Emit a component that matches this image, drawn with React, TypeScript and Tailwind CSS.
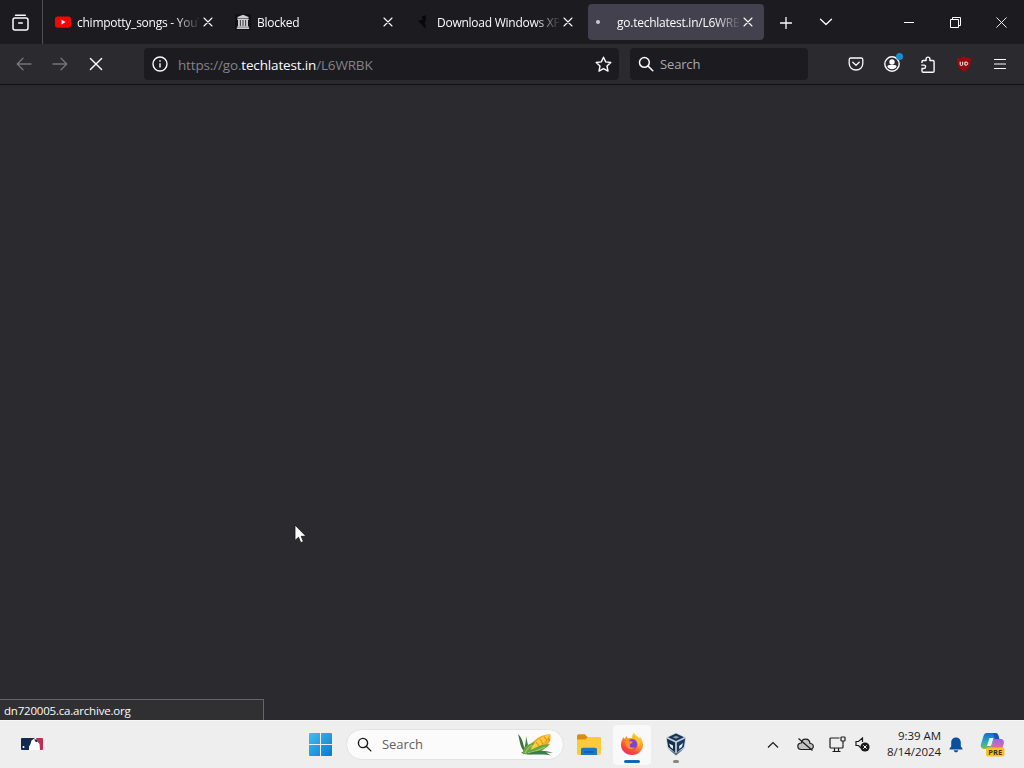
import type { ReactNode } from "react";

interface TabItem {
  id: number;
  title: string;
  icon: ReactNode;
  active?: boolean;
}

const CloseIcon = ({ size = 10, stroke = 1.1 }: { size?: number; stroke?: number }) => (
  <svg width={size} height={size} viewBox="0 0 10 10" fill="none" stroke="currentColor" strokeWidth={stroke} strokeLinecap="round">
    <path d="M1 1l8 8M9 1L1 9" />
  </svg>
);

const SearchIcon = ({ size = 16 }: { size?: number }) => (
  <svg width={size} height={size} viewBox="0 0 16 16" fill="none" stroke="currentColor" strokeWidth="1.5" strokeLinecap="round">
    <circle cx="6.4" cy="6.4" r="4.9" />
    <path d="M10.1 10.1l4.7 4.7" />
  </svg>
);

const YoutubeIcon = () => (
  <svg width="16" height="16" viewBox="0 0 16 16">
    <rect x="0" y="2.5" width="16" height="11.3" rx="2.8" fill="#f00808" />
    <path d="M6.5 5.8v4.6l4-2.3z" fill="#fff" />
  </svg>
);

const ArchiveIcon = () => (
  <svg width="16" height="16" viewBox="0 0 16 16">
    <rect width="16" height="16" fill="#111114" />
    <g fill="#cfcfd2">
      <path d="M8 .8L13.500 3v1h-11V3z" />
      <path d="M2.300 4.500h11.400v1.500H2.300zM2.300 12.200h11.400v1H2.300zM1.800 13.600h12.400v1.400H1.800z" />
      <path d="M3 6h1.900v6.500H3zM5.700 6h1.900v6.500H5.700zM8.400 6h1.900v6.500H8.400zM11.100 6H13v6.500h-1.900z" />
    </g>
  </svg>
);

const DarkSiteIcon = () => (
  <svg width="16" height="16" viewBox="0 0 16 16" fill="#08080a">
    <path d="M7 2l4-.5v5L9.500 8l1.500 5.500H9L7 10.500 5 9 3.500 6.500l4-.5z" />
  </svg>
);

const LoadingDot = () => <span className="ml-2 block h-1 w-1 rounded-full bg-[#c9c8d3]" />;

const tabs: TabItem[] = [
  { id: 1, title: "chimpotty_songs - YouTube", icon: <YoutubeIcon /> },
  { id: 2, title: "Blocked", icon: <ArchiveIcon /> },
  { id: 3, title: "Download Windows XP", icon: <DarkSiteIcon /> },
  { id: 4, title: "go.techlatest.in/L6WRBK", icon: <LoadingDot />, active: true },
];

function Tab({ tab }: { tab: TabItem }) {
  return (
    <div
      className={`mx-0.5 flex h-9 w-44 shrink-0 items-center rounded ${
        tab.active ? "bg-[#42414d]" : ""
      }`}
    >
      <div className={`flex w-[22px] shrink-0 items-center ${tab.active ? "ml-0" : "ml-[7px]"}`}>{tab.icon}</div>
      <span
        className={`mt-0.5 h-[18px] w-[122px] shrink-0 overflow-hidden whitespace-nowrap text-[12px] leading-[18px] tracking-[-0.25px] [mask-image:linear-gradient(to_right,#000_98px,transparent_124px)] ${
          tab.active ? "ml-[7px]" : ""
        }`}
      >
        {tab.title}
      </span>
      <span className="ml-[3px] flex w-[11px] justify-center">
        <CloseIcon />
      </span>
    </div>
  );
}

function TabStrip() {
  return (
    <div className="flex h-11 items-center bg-[#1c1b20]">
      <div className="flex h-full w-[43px] items-center border-r border-[#515059] pl-[11.5px]">
        <svg width="17" height="17" viewBox="0 0 17 17" fill="none" stroke="currentColor" strokeWidth="1.5" strokeLinecap="round">
          <path d="M3.500 1.200h9.800" />
          <rect x="1" y="4" width="15" height="12" rx="2" />
          <path d="M6.700 9h3.600" />
        </svg>
      </div>
      <div className="ml-[3px] flex">
        {tabs.map((tab) => (
          <Tab key={tab.id} tab={tab} />
        ))}
      </div>
      <div className="flex w-[39px] justify-center pt-px">
        <svg width="12" height="12" viewBox="0 0 12 12" stroke="currentColor" strokeWidth="1.300" strokeLinecap="round">
          <path d="M6 .5v11M.5 6h11" />
        </svg>
      </div>
      <div className="flex w-[42px] justify-center">
        <svg width="14" height="8" viewBox="0 0 14 8" fill="none" stroke="currentColor" strokeWidth="1.300" strokeLinecap="round" strokeLinejoin="round">
          <path d="M1.500 1.200L7 6.500l5.500-5.300" />
        </svg>
      </div>
      <div className="ml-auto flex h-full items-center">
        <div className="flex w-[46px] justify-center">
          <span className="h-px w-[10px] bg-white" />
        </div>
        <div className="flex w-[46px] justify-center">
          <svg width="11" height="11" viewBox="0 0 11 11" fill="none" stroke="#fff">
            <path d="M.5 2.500h8v8h-8zM2.500 2.500v-2h8v8h-2" />
          </svg>
        </div>
        <div className="flex w-[46px] justify-center">
          <svg width="11" height="11" viewBox="0 0 12 12" stroke="#fff" strokeWidth="1">
            <path d="M.5.5l11 11M11.500.5l-11 11" />
          </svg>
        </div>
      </div>
    </div>
  );
}

function NavBar() {
  return (
    <div className="flex h-[41px] items-center border-b border-[#111115] bg-[#2b2a2f]">
      <div className="flex w-[144px] items-center pl-4">
        <svg className="text-[#75747b]" width="16" height="16" viewBox="0 0 16 16" fill="none" stroke="currentColor" strokeWidth="1.300" strokeLinecap="round" strokeLinejoin="round">
          <path d="M15 8H1.500M7 2.200L1.200 8 7 13.800" />
        </svg>
        <svg className="ml-5 text-[#75747b]" width="16" height="16" viewBox="0 0 16 16" fill="none" stroke="currentColor" strokeWidth="1.300" strokeLinecap="round" strokeLinejoin="round">
          <path d="M1 8h13.500M9 2.200L14.800 8 9 13.800" />
        </svg>
        <span className="ml-[21px]">
          <CloseIcon size={14} stroke={1} />
        </span>
      </div>
      <div className="flex h-8 w-[475px] items-center rounded-sm bg-[#1c1b20] px-[7.5px]">
        <svg width="16" height="16" viewBox="0 0 16 16" fill="none" stroke="currentColor" strokeWidth="1.400">
          <circle cx="8" cy="8" r="7" />
          <path d="M8 7.200v4.300M8 4.300v1.500" />
        </svg>
        <span className="mt-0.5 ml-[10.5px] whitespace-nowrap text-[13.5px] tracking-[-0.16px] text-[#84838a]">
          https://go.<span className="text-[#fbfbfe]">techlatest.in</span>/L6WRBK
        </span>
        <svg className="ml-auto" width="17" height="17" viewBox="0 0 17 17" fill="none" stroke="currentColor" strokeWidth="1.400" strokeLinejoin="round">
          <path d="M8.500 1.200l2.200 4.700 5.100.6-3.800 3.500 1 5.100-4.500-2.500L4 15.100l1-5.100-3.800-3.500 5.100-.6z" />
        </svg>
      </div>
      <div className="ml-[11px] flex h-8 w-[178px] items-center rounded-sm bg-[#1c1b20] pl-2">
        <SearchIcon />
        <span className="mt-0.5 ml-1.5 text-[13px] tracking-[-0.15px] text-[#a9a8af]">Search</span>
      </div>
      <div className="ml-auto flex items-center pr-4">
        <div className="flex w-9 justify-end">
          <svg width="16" height="16" viewBox="0 0 16 16" fill="none" stroke="currentColor" strokeWidth="1.300" strokeLinecap="round" strokeLinejoin="round">
            <path d="M2.800 2h10.400c1 0 1.600.6 1.600 1.600v3.900c0 3.900-3 6.500-6.800 6.500s-6.800-2.600-6.800-6.500V3.600C1.200 2.600 1.800 2 2.800 2z" />
            <path d="M4.800 6.300L8 9.300l3.200-3" />
          </svg>
        </div>
        <div className="relative flex w-9 justify-end">
          <svg width="16" height="16" viewBox="0 0 16 16" fill="none" stroke="currentColor">
            <circle cx="8" cy="8" r="7.200" strokeWidth="1.400" />
            <circle cx="8" cy="6" r="2.700" fill="currentColor" stroke="none" />
            <path d="M3.300 10.500c.5-1.200 1.300-1.500 2.200-1.500h5c.9 0 1.700.3 2.200 1.500-1 1.700-2.700 2.700-4.700 2.700s-3.700-1-4.700-2.700z" fill="currentColor" stroke="none" />
          </svg>
          <span className="absolute -top-[3px] -right-[3px] h-[7px] w-[7px] rounded-full bg-[#148fd0]" />
        </div>
        <div className="flex w-9 justify-end">
          <svg width="16" height="17" viewBox="0 0 16 17" fill="none" stroke="currentColor" strokeWidth="1.400" strokeLinejoin="round">
            <path d="M2 7V5.700C2 5 2.500 4.500 3.200 4.500h2.900V3a1.900 1.900 0 0 1 3.800 0v1.500h3c.7 0 1.200.5 1.200 1.200V15c0 .7-.5 1.200-1.200 1.200H3.200C2.500 16.200 2 15.700 2 15v-2.500h1.900a1.700 1.700 0 0 0 0-3.400H1.300" />
          </svg>
        </div>
        <div className="flex w-9 justify-end">
          <svg width="16" height="16" viewBox="0 0 16 16">
            <path d="M8 .3c2 1.500 4.200 1.700 7 1.700 0 7-1.200 10.500-7 13.700C2.200 12.500 1 9 1 2 3.800 2 6 1.800 8 .3z" fill="#970a10" />
            <path d="M4.200 5.700v2.600c0 .8.4 1.200 1.200 1.200s1.300-.4 1.300-1.200V5.700M8.900 6.100h1.400c.9 0 1.400.5 1.400 1.400s-.5 1.600-1.400 1.600H8.900z" fill="none" stroke="#fff" strokeWidth="1" />
          </svg>
        </div>
        <div className="flex w-9 justify-end">
          <svg width="16" height="16" viewBox="0 0 16 16" stroke="currentColor" strokeWidth="1.200" strokeLinecap="round">
            <path d="M2.500 3.500h11M2.500 8h11M2.500 12.500h11" />
          </svg>
        </div>
      </div>
    </div>
  );
}

const CornIcon = () => (
  <svg width="38" height="24" viewBox="0 0 38 24">
    <path d="M1 1c4 4 5 8 6 13l4 7-7-1 3-2C3 14 3 8 1 1z" fill="#39733c" />
    <path d="M9 3c0 6-1 9-2 14l4-5z" fill="#4b8440" />
    <path d="M9 21C12 9 22 2 33 1c3 9-7 19-24 20z" fill="#f2a924" />
    <path d="M14 14C20 6 26 3 33 1c-3 7-9 12-18 16z" fill="#fbcf3d" />
    <path d="M19 9l3 4M23 6l3 5M27 3.500l3 4M31 5l2 3" stroke="#e98b14" strokeWidth="1.100" />
    <path d="M6 21c-1-5 4-10 12-12-2 4-5 6-4 8 6-4 13-6 19-6-5 6-15 12-27 10z" fill="#68a544" />
    <path d="M8 20c2-4 4-6 7-8M11 20c7-1 12-4 17-6" stroke="#b5d56a" fill="none" />
    <path d="M9 21c8-3 17-5 27-1l-7-.5 5 3c-7-2-16 0-25-1.500z" fill="#397d4d" />
  </svg>
);

const FolderIcon = () => (
  <svg width="26" height="24" viewBox="0 0 26 24">
    <path d="M1 3c0-1 .8-1.800 1.800-1.800h6L11.500 4H23c1 0 2 .8 2 2v3H1z" fill="#d98e0d" />
    <path d="M1 6.500h8.500L12 4h11c1.200 0 2 .8 2 2v14c0 1.200-.8 2-2 2H3c-1.200 0-2-.8-2-2z" fill="#fcca3d" />
    <path d="M5 22v-5.500c0-1 .8-1.700 1.700-1.700h12.600c1 0 1.700.7 1.700 1.700V22z" fill="#167ac8" />
    <path d="M8.500 19h9" stroke="#0c5ba3" strokeWidth="1.500" />
  </svg>
);

const FirefoxIcon = () => (
  <svg width="24" height="24" viewBox="0 0 24 24">
    <defs>
      <linearGradient id="fox" x1="0.8" y1="0" x2="0.2" y2="1">
        <stop offset="0" stopColor="#ffe03c" />
        <stop offset=".4" stopColor="#ff9b28" />
        <stop offset=".75" stopColor="#fa443f" />
        <stop offset="1" stopColor="#e42b74" />
      </linearGradient>
    </defs>
    <path d="M14 .8c1 2.500 3.500 3.200 4.800 5 .7 0 1.300-.1 1.500-.7 3 4.700 3.900 9.200.9 13.200-2.200 3.400-5.400 4.800-9.200 4.800C5.600 23.100 1 18.600 1 12.800c0-3.600 1.200-5.500 2.600-7.800l.7 2L6.500 4l1.200 2.400c2-.6 3.500-.6 4.500-.1C12 4 12.600 2.300 14 .8z" fill="url(#fox)" />
    <circle cx="12" cy="12.200" r="5.200" fill="#8042cf" />
    <path d="M5 8.800c2-1.500 4-.7 5.300.4l2.500.4c-.2 1.600-2 1.700-3.100 3.300-.3 2.600 3 3.800 5.200 1.800-1.400 4.500-9.900 3.400-9.900-5.900z" fill="#ff9125" />
    <path d="M14 5.700c3.500 2.300 5 5.800 4 9.300 3-3 2.400-7-.4-9.800z" fill="#ffc52f" />
  </svg>
);

const VirtualBoxIcon = () => (
  <svg width="24" height="24" viewBox="0 0 24 24">
    <path d="M12 .8l10 4.700-1.500 11L12 23.500l-8.500-7L2 5.500z" fill="#c3ced8" />
    <path d="M12 1.500l8 3.700L12 9 4 5.200z" fill="#163354" />
    <path d="M2.800 6.600l8.300 4v9.800L4.200 15z" fill="#122c4d" />
    <path d="M21.200 6.600l-8.300 4v9.800l6.900-5.400z" fill="#183b63" />
    <path d="M5 11.500l1.500 3.600 2.500 2v-3.600zM19 11l-3.800 3v3l2.800-2.200z" fill="#eef3f7" />
    <path d="M8.500 5.200L12 3.800l3.500 1.400L12 6.700z" fill="#8296a9" />
    <path d="M4.500 17l7.500 4 7.500-4-7.500 6.500z" fill="#596f83" />
  </svg>
);

const CopilotIcon = () => (
  <svg width="25" height="25" viewBox="0 0 25 25">
    <defs>
      <linearGradient id="copLeft" x1="0" y1="0" x2="0" y2="1">
        <stop offset="0" stopColor="#1b69c6" />
        <stop offset=".5" stopColor="#22a5bf" />
        <stop offset="1" stopColor="#82bd4d" />
      </linearGradient>
      <linearGradient id="copRight" x1="0" y1="0" x2="0" y2="1">
        <stop offset="0" stopColor="#9964e6" />
        <stop offset="1" stopColor="#f36f91" />
      </linearGradient>
    </defs>
    <path d="M7 1h8c2 0 3 1 3.500 3l.8 3h-5L11 17H5c-3 0-5-2-4-5l2.500-8C4.200 2 5 1 7 1z" fill="url(#copLeft)" />
    <path d="M13 1h2c2 0 3 1 3.500 3l.8 3h-4.500z" fill="#1555ba" />
    <path d="M9.500 6h4l-2.500 8H7z" fill="#e8f2f4" />
    <path d="M14 7h6.500c2.500 0 4 2 3.300 4.500L22 18H10.500z" fill="url(#copRight)" />
    <rect x="6" y="15.500" width="18.500" height="9" rx="2" fill="#f7c41d" />
    <text x="15.300" y="22.800" textAnchor="middle" fontSize="7.500" fontWeight="700" fontFamily="Open Sans, sans-serif" fill="#3d3210">PRE</text>
  </svg>
);

function TaskBar() {
  return (
    <div className="flex h-12 items-center border-t border-[#f8f8f8] bg-[#eeeeee] text-[#1b1b1b]">
      <div className="w-[309px] pb-0.5 pl-[21px]">
        <svg width="22" height="12" viewBox="0 0 22 12">
          <rect width="22" height="12" rx="1" fill="#fff" />
          <path d="M1 0h13l-3.500 2.500L9.500 6 8 8.500V12H1q-1 0-1-1V1q0-1 1-1z" fill="#102b50" />
          <path d="M15 0h6q1 0 1 1v10q0 1-1 1h-2l-.500-6L16 3z" fill="#bd3155" />
          <circle cx="2.500" cy="9" r="1" fill="#fff" />
          <path d="M13 1.500h2.500l1 2-1.500.8z" fill="#102b50" />
        </svg>
      </div>
      <svg width="23" height="23" viewBox="0 0 23 23">
        <defs>
          <linearGradient id="win" x1="0" y1="0" x2="1" y2="1">
            <stop offset="0" stopColor="#42bfef" />
            <stop offset="1" stopColor="#0878cf" />
          </linearGradient>
        </defs>
        <path d="M0 1q0-1 1-1h10v11H0zM12 0h10q1 0 1 1v10H12zM0 12h11v11H1q-1 0-1-1zM12 12h11v10q0 1-1 1H12z" fill="url(#win)" />
      </svg>
      <div className="ml-[14px] flex h-[31px] w-[218px] items-center rounded-full border border-[#e3e3e3] bg-[#fbfbfb] pl-[10px]">
        <SearchIcon size={15} />
        <span className="ml-[10px] text-[13px] tracking-[-0.05px] text-[#606060]">Search</span>
        <span className="mr-2 ml-auto">
          <CornIcon />
        </span>
      </div>
      <div className="flex">
        <div className="flex w-[49px] items-center justify-center">
          <FolderIcon />
        </div>
        <div className="relative flex h-10 w-[38px] items-center justify-center rounded bg-[#f9f9f9] pb-0.5">
          <FirefoxIcon />
          <span className="absolute bottom-0.5 h-[3px] w-4 rounded-full bg-[#1268b8]" />
        </div>
        <div className="relative ml-[7px] flex h-10 w-9 items-center justify-center pb-0.5">
          <VirtualBoxIcon />
          <span className="absolute bottom-0.5 h-[3px] w-1.5 rounded-full bg-[#858585]" />
        </div>
      </div>
      <div className="ml-auto flex items-center pr-[19px]">
        <svg width="12" height="8" viewBox="0 0 12 8" fill="none" stroke="currentColor" strokeWidth="1.200">
          <path d="M1 6.500l5-5 5 5" />
        </svg>
        <svg className="ml-[18px]" width="17" height="15" viewBox="0 0 17 15" fill="none" stroke="currentColor" strokeWidth="1.200">
          <path d="M4.500 12.500h8.200c5 0 4.500-6 .3-6C12.500.8 5 .9 4.300 6-.4 6-.3 12.500 4.500 12.500z" fill="#c2c2c2" />
          <path d="M1.500 1.500l14 12" />
        </svg>
        <svg className="ml-[15px]" width="17" height="17" viewBox="0 0 17 17" fill="none" stroke="currentColor" strokeWidth="1.200">
          <path d="M10.500 2H2Q1 2 1 3v8q0 1 1 1h11q1 0 1-1V8.500M5.500 12v3.500M9.500 12v3.500M3.500 15.500h8" />
          <rect x="12" y="1" width="4" height="4" rx=".8" />
          <path d="M14 5v3.500" />
        </svg>
        <svg className="ml-[9px]" width="15" height="15" viewBox="0 0 15 15" fill="none" stroke="currentColor" strokeWidth="1.200">
          <path d="M6 11L3.500 8.500H1v-4h2.500L7.500 1v4" />
          <circle cx="10" cy="10" r="4.600" fill="currentColor" stroke="none" />
          <path d="M8.300 8.300l3.400 3.400M11.700 8.300l-3.400 3.400" stroke="#fff" strokeWidth="1" />
        </svg>
        <div className="ml-3 w-[59px] pb-0.5 text-right text-[11.5px] leading-4 tracking-[-0.05px] whitespace-nowrap">
          <div>9:39 AM</div>
          <div>8/14/2024</div>
        </div>
        <svg className="ml-2" width="14" height="16" viewBox="0 0 14 16" fill="#0b4f9e">
          <path d="M7 .5c3 0 4.800 2.200 4.800 5v3.800l1.700 2.400v.8H.5v-.8l1.700-2.400V5.500c0-2.800 1.800-5 4.800-5zM4.800 13.300h4.400C9 14.700 8.200 15.300 7 15.300s-2-.6-2.200-2z" />
        </svg>
        <span className="ml-[17px]">
          <CopilotIcon />
        </span>
      </div>
    </div>
  );
}

export default function App() {
  return (
    <div className="relative flex h-[768px] w-[1024px] flex-col overflow-hidden bg-[#2b2a2e] font-['Open_Sans','Noto_Sans',sans-serif] text-[#fbfbfe]">
      <TabStrip />
      <NavBar />
      <main className="flex flex-1 items-end">
        <div className="h-[21px] w-[264px] border-t border-r border-[#66666a] bg-[#303033] pl-1 text-[11.5px] leading-[22px] tracking-[-0.2px]">
          dn720005.ca.archive.org
        </div>
      </main>
      <TaskBar />
      <svg className="absolute top-[524px] left-[293.5px]" width="13" height="20" viewBox="0 0 13 20">
        <path d="M1 1v15.500l3.500-3.300 2.300 5.500 2.600-1.100L7.200 12.300H12z" fill="#fff" stroke="#111" strokeWidth=".8" />
      </svg>
    </div>
  );
}
